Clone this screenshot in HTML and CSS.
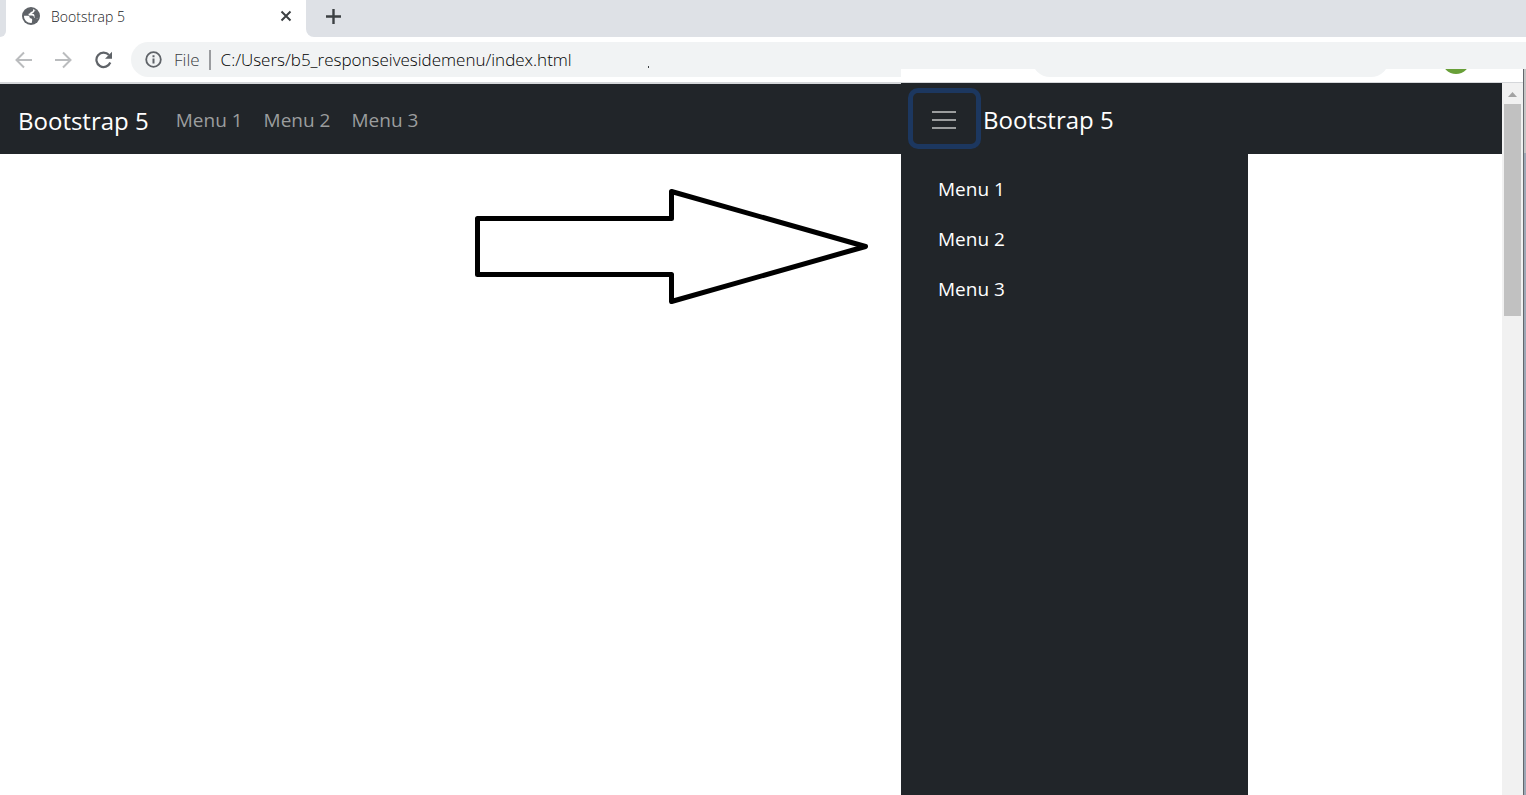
FILE: index.html
```html
<!DOCTYPE html>
<html lang="en">
<head>
    <meta charset="utf-8">
    <title>Bootstrap 5</title>
    <link rel="stylesheet" href="styles.css">
</head>
<body>
    <header class="browser">
        <div class="tabs">
            <div class="tab-edge"></div>
            <div class="tab">
                <svg class="globe" width="18" height="18" viewBox="0 0 18 18">
                    <circle cx="9" cy="9" r="9" fill="#5f6368"/>
                    <path d="M11 2.200C11.500 4.300 10.500 4.800 8.600 5C8.600 6.300 7.800 6.600 6.600 6.800V8.500H10C11.600 8.500 12 9.500 12 11H13.500C14.500 11 15 11.500 15.300 12C16.300 10.500 16.500 7 15 5C14 3.500 12.500 2.500 11 2.200Z" fill="#fff"/>
                    <path d="M15.300 12C14.700 11.300 14.200 11 13.300 11H12.500V9C12.500 7.500 11.700 6.800 10.500 6.800H9.500C11.500 6 12.800 4.500 12.800 3L15.500 4.500L17 9Z" fill="#5f6368"/>
                    <path d="M2 8.800H5.500C7.500 8.800 7.800 10 7.800 11.200C9.500 11.200 10.300 11.800 10.200 13.200L9.700 16C5.500 16.400 1.800 13.200 2 8.800Z" fill="#fff"/>
                </svg>
                <span class="tab-title">Bootstrap 5</span>
                <button class="icon-btn" type="button" aria-label="Close tab">
                    <svg width="12" height="12" viewBox="0 0 12 12" stroke="#3c4043" stroke-width="2"><path d="M1.500 1.500L10.500 10.500M10.500 1.500L1.500 10.500"/></svg>
                </button>
            </div>
            <div class="tabs-rest">
                <button class="icon-btn" type="button" aria-label="New tab">
                    <svg width="15" height="15" viewBox="0 0 15 15" stroke="#3c4043" stroke-width="2.400"><path d="M7.500 0V15M0 7.500H15"/></svg>
                </button>
            </div>
        </div>
        <div class="toolbar">
            <button class="icon-btn" type="button" aria-label="Back">
                <svg width="18" height="18" viewBox="0 0 18 18" fill="none" stroke="#babcbe" stroke-width="2"><path d="M17 9H2M9 1.500L1.500 9L9 16.500"/></svg>
            </button>
            <button class="icon-btn" type="button" aria-label="Forward">
                <svg width="18" height="18" viewBox="0 0 18 18" fill="none" stroke="#babcbe" stroke-width="2"><path d="M0 9H15M8 1.500L15.500 9L8 16.500"/></svg>
            </button>
            <button class="icon-btn" type="button" aria-label="Reload">
                <svg width="18" height="18" viewBox="0 0 18 18"><path d="M14 4A7.200 7.200 0 1 0 15.300 11.500" fill="none" stroke="#5f6368" stroke-width="2.200"/><path d="M17 .8V7.800H10Z" fill="#5f6368"/></svg>
            </button>
            <div class="address">
                <svg width="17" height="17" viewBox="0 0 17 17"><circle cx="8.500" cy="8.500" r="7.300" fill="none" stroke="#5f6368" stroke-width="1.800"/><path d="M8.500 7.500V12.500M8.500 4.300V6.200" stroke="#5f6368" stroke-width="2"/></svg>
                <label for="url">File</label>
                <input type="text" id="url" value="C:/Users/b5_responseivesidemenu/index.html">
            </div>
        </div>
    </header>

    <main class="screens">
        <!-- wide screen -->
        <section class="wide">
            <nav class="navbar">
                <a class="brand" href="#">Bootstrap 5</a>
                <a class="nav-link" href="#">Menu 1</a>
                <a class="nav-link" href="#">Menu 2</a>
                <a class="nav-link" href="#">Menu 3</a>
            </nav>
            <svg class="arrow" width="394" height="118" viewBox="0 0 394 118" fill="none" stroke="#000" stroke-width="5" stroke-linejoin="round">
                <path d="M3.500 31.500H197.500V4.500L391.500 59.500L197.500 114.500V87.500H3.500Z"/>
            </svg>
        </section>

        <!-- small screen with the side menu open -->
        <section class="small">
            <div class="small-window">
                <div class="strip">
                    <div class="strip-address"></div>
                    <div class="avatar"></div>
                </div>
                <div class="viewport">
                    <div class="page">
                        <nav class="navbar">
                            <button class="toggler" type="button" aria-label="Toggle menu">
                                <svg width="24" height="18" viewBox="0 0 24 18" stroke="#9b9d9e" stroke-width="2"><path d="M0 1H24M0 9H24M0 17H24"/></svg>
                            </button>
                            <a class="brand" href="#">Bootstrap 5</a>
                        </nav>
                        <div class="sidebar">
                            <a href="#">Menu 1</a>
                            <a href="#">Menu 2</a>
                            <a href="#">Menu 3</a>
                        </div>
                    </div>
                    <div class="scrollbar">
                        <div class="scroll-up"></div>
                        <div class="thumb"></div>
                    </div>
                </div>
            </div>
            <div class="edge"></div>
        </section>
    </main>
</body>
</html>
```
FILE: styles.css
```css
* {
    box-sizing: border-box;
}
body {
    margin: 0;
    min-height: 100vh;
    display: flex;
    flex-direction: column;
    font-family: "Segoe UI", "Open Sans", "Noto Sans", sans-serif;
    background-color: #fff;
}
a {
    text-decoration: none;
}
svg {
    display: block;
    flex: none;
}
.icon-btn {
    border: none;
    padding: 0;
    background: none;
    cursor: pointer;
}

/* browser tabs and address bar */
.tabs {
    display: flex;
    height: 37px;
    background-color: #fff;
}
.tab-edge {
    width: 6px;
    background-color: #dee1e6;
    border-bottom-right-radius: 6px;
}
.tab {
    display: flex;
    align-items: center;
    width: 300px;
    padding: 0 14px 5px 16px;
    background-color: #fff;
}
.tab-title {
    flex: 1;
    margin-left: 11px;
    font-size: 14px;
    font-weight: 300;
    color: #202124;
}
.tabs-rest {
    flex: 1;
    display: flex;
    align-items: center;
    padding: 0 20px 5px;
    background-color: #dee1e6;
    border-bottom-left-radius: 8px;
}
.toolbar {
    display: flex;
    align-items: center;
    gap: 22px;
    height: 47px;
    padding-left: 15px;
    border-bottom: 2px solid #d5d7da;
}
.address {
    flex: 1;
    display: flex;
    align-items: center;
    height: 35px;
    margin-left: -4px;
    padding-left: 14px;
    background: #f1f3f4 linear-gradient(#3c4043, #3c4043) 517px 24px / 1px 2px no-repeat;
    border-radius: 18px 0 0 18px;
    font-size: 17px;
    font-weight: 300;
}
.address label {
    margin-left: 12px;
    padding-right: 9px;
    border-right: 2px solid #9a9c9f;
    line-height: 20px;
    color: #3c4043;
}
.address input {
    flex: 1;
    padding: 0 0 0 10px;
    border: none;
    outline: none;
    background: none;
    font: inherit;
    color: #000;
}

/* the two screens side by side */
.screens {
    flex: 1;
    display: grid;
    grid-template-columns: minmax(0, 1fr) 625px;
}
.navbar {
    display: flex;
    align-items: center;
    height: 70px;
    background-color: #212529;
}
.brand {
    font-size: 24px;
    padding-top: 2px;
    color: #fff;
}
.nav-link {
    margin-left: 21px;
    padding-top: 2px;
    font-size: 19px;
    color: #9b9d9e;
}
.wide .navbar {
    padding: 0 18px;
}
.wide .brand {
    margin-right: 6px;
}
.arrow {
    margin: 33px 33px 0 auto;
}

.small {
    display: flex;
    margin-top: -15px;
    background-color: #fff;
    z-index: 1;
}
.small-window {
    flex: 1;
    display: flex;
    flex-direction: column;
}
.strip {
    display: flex;
    align-items: flex-end;
    height: 14px;
    padding: 0 53px 0 131px;
    border-bottom: 1px solid #d5d7da;
    overflow: hidden;
}
.strip-address {
    flex: 1;
    height: 36px;
    margin: 0 53px 5px 0;
    border-radius: 18px;
    background-color: #f1f3f4;
}
.avatar {
    width: 28px;
    height: 28px;
    margin-bottom: 8px;
    border-radius: 50%;
    background-color: #689f38;
}
.viewport {
    flex: 1;
    display: flex;
}
.page {
    flex: 1;
    display: flex;
    flex-direction: column;
}
.small .navbar {
    height: 71px;
    padding-left: 7px;
}
.toggler {
    display: flex;
    align-items: center;
    justify-content: center;
    width: 73px;
    height: 61px;
    margin-right: 2px;
    padding: 2px 2px 0 0;
    border: 5px solid #1c375f;
    border-radius: 10px;
    background: none;
    cursor: pointer;
}
.sidebar {
    flex: 1;
    width: 347px;
    padding: 10px 37px;
    background-color: #212529;
}
.sidebar a {
    display: block;
    font-size: 19px;
    line-height: 50px;
    color: #fff;
}
.scrollbar {
    width: 21px;
    padding: 9px 2px;
    background-color: #f1f1f1;
}
.scroll-up {
    width: 9px;
    height: 5px;
    margin: 0 auto 7px;
    background-color: #a3a3a3;
    clip-path: polygon(50% 0, 100% 100%, 0 100%);
}
.thumb {
    height: 212px;
    background-color: #c1c1c1;
}
.edge {
    width: 3px;
    border-left: 1px solid #63676c;
    background: linear-gradient(#c4c4c4 84px, #9ca7b5 84px);
}
```
